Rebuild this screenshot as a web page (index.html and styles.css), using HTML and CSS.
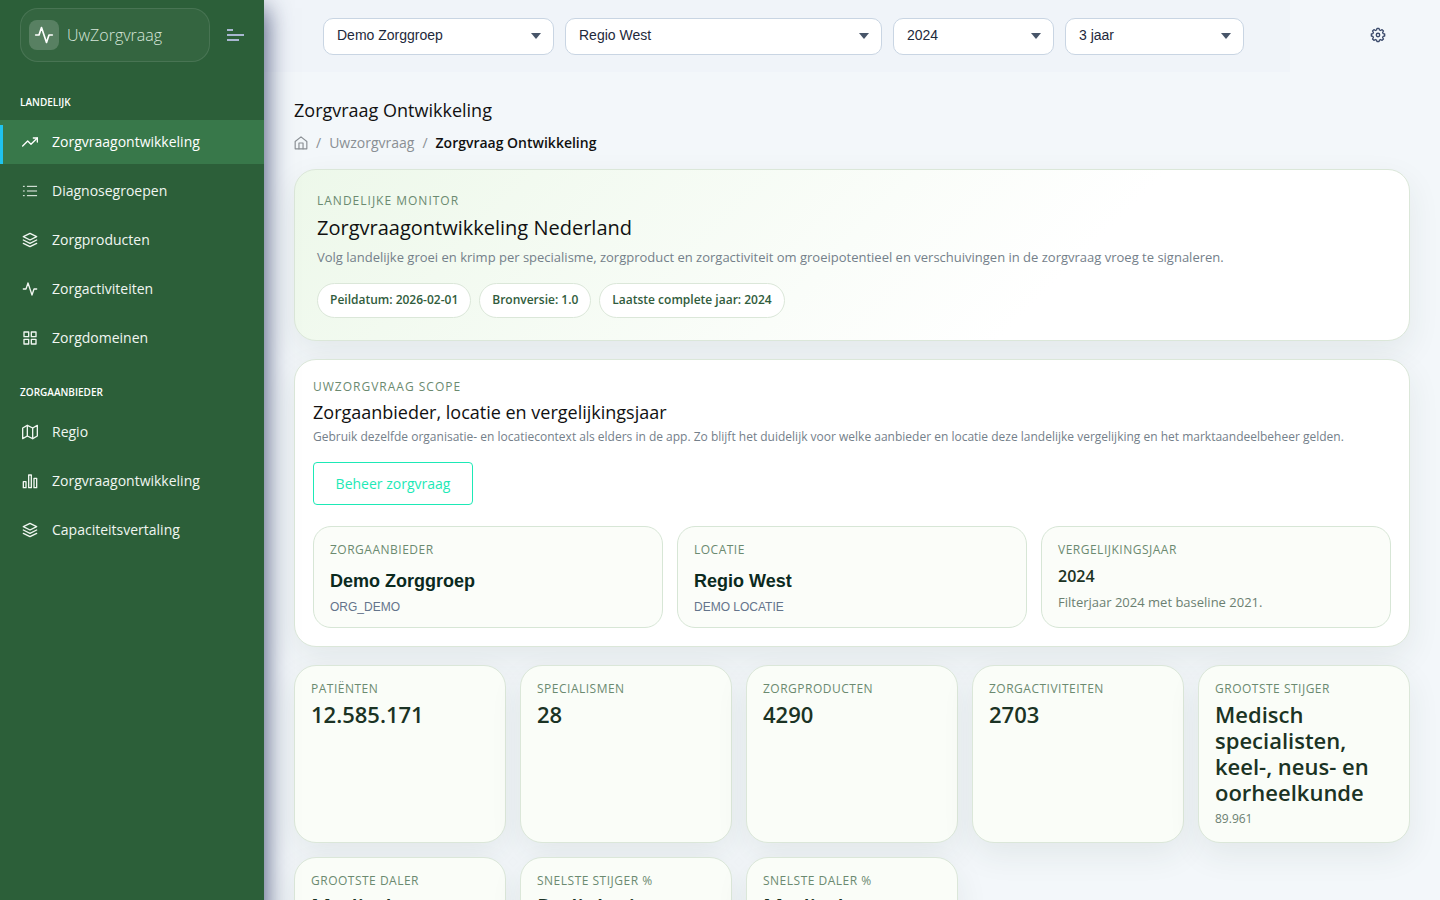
FILE: index.html
```html
<!DOCTYPE html>
<html lang="nl">
<head>
    <meta charset="UTF-8">
    <meta name="viewport" content="width=device-width, initial-scale=1.0">
    <title>Zorgvraag Ontwikkeling</title>
    <link rel="stylesheet" href="styles.css">
</head>
<body>

    <div class="layout">
        <aside class="sidebar">
            <div class="sidebar-header">
                <a class="brand" href="#">
                    <span class="brand-icon">
                        <svg viewBox="0 0 24 24"><path d="M22 12h-4l-3 9L9 3l-3 9H2"/></svg>
                    </span>
                    <span class="brand-name">UwZorgvraag</span>
                </a>
                <button class="menu-toggle" type="button" aria-label="Menu">
                    <svg viewBox="0 0 18 14"><path d="M1 2h6M1 7h17M1 12h12"/></svg>
                </button>
            </div>

            <nav class="nav">
                <h6 class="nav-title">Landelijk</h6>
                <a class="nav-item active" href="#">
                    <svg viewBox="0 0 24 24"><path d="M23 6l-9.5 9.5-5-5L1 18"/><path d="M17 6h6v6"/></svg>
                    <span>Zorgvraagontwikkeling</span>
                </a>
                <a class="nav-item" href="#">
                    <svg class="thin" viewBox="0 0 24 24"><path d="M8 5h14M8 12h14M8 19h14M2 5h1.5M2 12h1.5M2 19h1.5"/></svg>
                    <span>Diagnosegroepen</span>
                </a>
                <a class="nav-item" href="#">
                    <svg viewBox="0 0 24 24"><path d="M12 2L2 7l10 5 10-5z"/><path d="M2 12l10 5 10-5"/><path d="M2 17l10 5 10-5"/></svg>
                    <span>Zorgproducten</span>
                </a>
                <a class="nav-item" href="#">
                    <svg viewBox="0 0 24 24"><path d="M22 12h-4l-3 9L9 3l-3 9H2"/></svg>
                    <span>Zorgactiviteiten</span>
                </a>
                <a class="nav-item" href="#">
                    <svg viewBox="0 0 24 24"><path d="M3 3h7v7H3zM14 3h7v7h-7zM14 14h7v7h-7zM3 14h7v7H3z"/></svg>
                    <span>Zorgdomeinen</span>
                </a>

                <h6 class="nav-title">Zorgaanbieder</h6>
                <a class="nav-item" href="#">
                    <svg viewBox="0 0 24 24"><path d="M1 6v16l7-4 8 4 7-4V2l-7 4-8-4z"/><path d="M8 2v16M16 6v16"/></svg>
                    <span>Regio</span>
                </a>
                <a class="nav-item" href="#">
                    <svg viewBox="0 0 24 24"><path d="M2 13h4v9H2zM10 3h4v19h-4zM18 8h4v14h-4z"/></svg>
                    <span>Zorgvraagontwikkeling</span>
                </a>
                <a class="nav-item" href="#">
                    <svg viewBox="0 0 24 24"><path d="M12 2L2 7l10 5 10-5z"/><path d="M2 12l10 5 10-5"/><path d="M2 17l10 5 10-5"/></svg>
                    <span>Capaciteitsvertaling</span>
                </a>
            </nav>
        </aside>

        <div class="page">
            <header class="topbar">
                <form class="filters">
                    <select class="filter" aria-label="Organisatie"><option>Demo Zorggroep</option></select>
                    <select class="filter" aria-label="Locatie"><option>Regio West</option></select>
                    <select class="filter" aria-label="Jaar"><option>2024</option></select>
                    <select class="filter" aria-label="Periode"><option>3 jaar</option></select>
                </form>
                <div class="topbar-actions">
                    <button class="settings" type="button" aria-label="Instellingen">
                        <svg viewBox="0 0 24 24"><path d="M9.800 4.500L10.500 2h3l.7 2.500 1.600.7 2.300-1.300 2.100 2.100-1.300 2.300.7 1.600 2.400.6v3l-2.400.6-.7 1.600 1.300 2.300-2.100 2.100-2.300-1.300-1.600.7-.7 2.500h-3l-.7-2.500-1.600-.7-2.300 1.300L3.800 18l1.300-2.300-.7-1.600-2.400-.6v-3l2.400-.6.7-1.600L3.800 6l2.100-2.100 2.300 1.300z"/><circle cx="12" cy="12" r="2.600"/></svg>
                    </button>
                </div>
            </header>

            <main class="content">
                <h1 class="page-title">Zorgvraag Ontwikkeling</h1>
                <nav class="breadcrumb" aria-label="Kruimelpad">
                    <a href="#" aria-label="Home">
                        <svg viewBox="0 0 24 24"><path d="M2 9.500L12 1.500l10 8V22H2z"/><path d="M8.500 22V12h7v10"/></svg>
                    </a>
                    <span>/</span>
                    <a href="#">Uwzorgvraag</a>
                    <span>/</span>
                    <strong>Zorgvraag Ontwikkeling</strong>
                </nav>

                <section class="card hero">
                    <p class="eyebrow">Landelijke monitor</p>
                    <h2 class="hero-title">Zorgvraagontwikkeling Nederland</h2>
                    <p class="hero-text">Volg landelijke groei en krimp per specialisme, zorgproduct en zorgactiviteit om groeipotentieel en verschuivingen in de zorgvraag vroeg te signaleren.</p>
                    <div class="pills">
                        <span class="pill">Peildatum: 2026-02-01</span>
                        <span class="pill">Bronversie: 1.0</span>
                        <span class="pill">Laatste complete jaar: 2024</span>
                    </div>
                </section>

                <section class="card scope">
                    <p class="eyebrow">UwZorgvraag scope</p>
                    <h3 class="scope-title">Zorgaanbieder, locatie en vergelijkingsjaar</h3>
                    <p class="scope-text">Gebruik dezelfde organisatie- en locatiecontext als elders in de app. Zo blijft het duidelijk voor welke aanbieder en locatie deze landelijke vergelijking en het marktaandeelbeheer gelden.</p>
                    <button class="btn-outline" type="button">Beheer zorgvraag</button>
                    <div class="scope-grid">
                        <div class="scope-item">
                            <p class="label">Zorgaanbieder</p>
                            <p class="org-name">Demo Zorggroep</p>
                            <p class="org-code">ORG_DEMO</p>
                        </div>
                        <div class="scope-item">
                            <p class="label">Locatie</p>
                            <p class="org-name">Regio West</p>
                            <p class="org-code">DEMO LOCATIE</p>
                        </div>
                        <div class="scope-item">
                            <p class="label">Vergelijkingsjaar</p>
                            <p class="year">2024</p>
                            <p class="note">Filterjaar 2024 met baseline 2021.</p>
                        </div>
                    </div>
                </section>

                <section class="stats">
                    <div class="card stat">
                        <p class="label">Patiënten</p>
                        <p class="value">12.585.171</p>
                    </div>
                    <div class="card stat">
                        <p class="label">Specialismen</p>
                        <p class="value">28</p>
                    </div>
                    <div class="card stat">
                        <p class="label">Zorgproducten</p>
                        <p class="value">4290</p>
                    </div>
                    <div class="card stat">
                        <p class="label">Zorgactiviteiten</p>
                        <p class="value">2703</p>
                    </div>
                    <div class="card stat">
                        <p class="label">Grootste stijger</p>
                        <p class="value">Medisch specialisten, keel-, neus- en oorheelkunde</p>
                        <p class="note">89.961</p>
                    </div>
                    <div class="card stat">
                        <p class="label">Grootste daler</p>
                        <p class="value">Medisch</p>
                    </div>
                    <div class="card stat">
                        <p class="label">Snelste stijger %</p>
                        <p class="value">Radiologie</p>
                    </div>
                    <div class="card stat">
                        <p class="label">Snelste daler %</p>
                        <p class="value">Medisch</p>
                    </div>
                </section>
            </main>
        </div>
    </div>

</body>
</html>
```

FILE: styles.css
```css
* {
    box-sizing: border-box;
}

body {
    margin: 0;
    font-family: "Open Sans", sans-serif;
    font-size: 14px;
    color: #111;
    background-color: #f3f7fa;
}

h1, h2, h3, h6, p {
    margin: 0;
    font-weight: 400;
}

a {
    color: inherit;
    text-decoration: none;
}

svg {
    display: block;
    fill: none;
    stroke: currentColor;
    stroke-width: 2;
    stroke-linecap: round;
    stroke-linejoin: round;
}

button {
    font-family: inherit;
    cursor: pointer;
}

.layout {
    display: flex;
    align-items: stretch;
    min-height: 100vh;
}

/* Sidebar */
.sidebar {
    position: relative;
    z-index: 2;
    flex: 0 0 264px;
    background-color: #2c5f39;
    box-shadow: 0 10px 24px 2px rgba(38, 50, 96, 0.8);
}

.sidebar-header {
    display: flex;
    align-items: center;
    gap: 16px;
    padding: 8px 20px 0;
}

.brand {
    display: flex;
    align-items: center;
    gap: 8px;
    flex: 0 0 190px;
    height: 54px;
    padding: 0 8px;
    border: 1px solid rgba(255, 255, 255, 0.1);
    border-radius: 18px;
    background-color: rgba(255, 255, 255, 0.04);
}

.brand-icon {
    display: flex;
    align-items: center;
    justify-content: center;
    width: 30px;
    height: 30px;
    border-radius: 8px;
    background-color: rgba(255, 255, 255, 0.18);
    color: #fff;
}

.brand-icon svg {
    width: 20px;
    height: 20px;
}

.brand-name {
    font-size: 16px;
    font-weight: 300;
    color: #d6e5da;
}

.menu-toggle {
    padding: 0;
    border: 0;
    background: none;
    color: #a9b7d1;
}

.menu-toggle svg {
    width: 18px;
    height: 14px;
    stroke-linecap: butt;
}

.nav-title {
    padding: 33px 20px 11px;
    font-size: 10px;
    line-height: 14px;
    font-weight: 600;
    text-transform: uppercase;
    color: #fff;
}

.nav-item + .nav-title {
    padding-top: 20px;
}

.nav-item {
    display: flex;
    align-items: center;
    gap: 14px;
    height: 44px;
    margin-bottom: 5px;
    padding: 0 22px;
    color: #f0f6f1;
}

.nav-item span {
    padding-bottom: 2px;
}

.nav-item svg {
    width: 16px;
    height: 16px;
    flex: none;
}

.nav-item .thin {
    stroke-width: 1.5;
}

.nav-item.active {
    background: linear-gradient(#1fc3ee, #1fc3ee) 0 100% / 3px 39px no-repeat #38784a;
    color: #fff;
}

/* Topbar */
.page {
    flex: 1;
    min-width: 0;
}

.topbar {
    display: flex;
    height: 72px;
}

.filters {
    flex: 1;
    display: grid;
    grid-template-columns: 231fr 317fr 161fr 179fr;
    gap: 11px;
    padding: 18px 46px 17px 59px;
    background-color: #f0f4f9;
}

.filter {
    appearance: none;
    min-width: 0;
    padding: 0 32px 3px 13px;
    border: 1px solid #c9d5e3;
    border-radius: 10px;
    background: #fff url("data:image/svg+xml,%3Csvg xmlns='http://www.w3.org/2000/svg' width='10' height='6'%3E%3Cpath d='M0 0h10L5 6z' fill='%23475569'/%3E%3C/svg%3E") right 12px top 14px no-repeat;
    font-family: "Liberation Sans", Arial, sans-serif;
    font-size: 14px;
    color: #1e293b;
}

.topbar-actions {
    flex: 0 0 150px;
    display: flex;
    justify-content: flex-end;
    padding: 27px 54px 0 0;
}

.settings {
    align-self: flex-start;
    padding: 0;
    border: 0;
    background: none;
    color: #3b4a6b;
}

.settings svg {
    width: 16px;
    height: 16px;
}

/* Content */
.content {
    padding: 26px 30px 30px;
}

.page-title {
    font-size: 18px;
    line-height: 25px;
}

.breadcrumb {
    display: flex;
    align-items: center;
    gap: 8px;
    margin: 10px 0 16px;
    line-height: 20px;
    color: #8a8f94;
}

.breadcrumb svg {
    width: 14px;
    height: 14px;
}

.breadcrumb strong {
    font-weight: 600;
    color: #111;
}

.card {
    border: 1px solid #dbe7d9;
    border-radius: 22px;
    background-color: #fff;
    box-shadow: 0 12px 32px rgba(44, 62, 50, 0.08);
}

.eyebrow {
    font-size: 12px;
    line-height: 18px;
    letter-spacing: 1px;
    text-transform: uppercase;
    color: #6b8a70;
}

.hero {
    padding: 22px;
    background-image: linear-gradient(135deg, #edf8ea 0%, #fff 68%);
}

.hero-title {
    margin: 4px 0;
    font-size: 20px;
    line-height: 28px;
}

.hero-text {
    font-size: 13px;
    line-height: 22px;
    color: #74808a;
}

.pills {
    display: flex;
    flex-wrap: wrap;
    gap: 8px;
    margin-top: 15px;
}

.pill {
    padding: 7px 12px 8px;
    border: 1px solid #dbe7d9;
    border-radius: 18px;
    background-color: #fff;
    font-size: 12px;
    line-height: 18px;
    font-weight: 600;
    color: #315c3c;
}

.scope {
    margin-top: 18px;
    padding: 18px;
}

.scope-title {
    margin-top: 4px;
    font-size: 18px;
    line-height: 24px;
}

.scope-text {
    margin-top: 4px;
    font-size: 12px;
    line-height: 18px;
    color: #74808a;
}

.btn-outline {
    min-width: 160px;
    height: 43px;
    margin: 16px 0 21px;
    padding: 0 20px;
    border: 1px solid #1de9b6;
    border-radius: 4px;
    background-color: #fff;
    font-size: 14px;
    color: #1de9b6;
}

.scope-grid {
    display: grid;
    grid-template-columns: repeat(3, 1fr);
    gap: 14px;
}

.scope-item {
    min-height: 102px;
    padding: 14px 16px 10px;
    border: 1px solid #d7e6d6;
    border-radius: 18px;
    background-color: #fbfdf9;
}

.label {
    font-size: 12px;
    line-height: 18px;
    letter-spacing: 0.5px;
    text-transform: uppercase;
    color: #6b8a70;
}

.org-name {
    margin-top: 10px;
    font-family: "Liberation Sans", Arial, sans-serif;
    font-size: 18px;
    line-height: 24px;
    font-weight: 700;
    color: #0b2a1e;
}

.org-code {
    margin-top: 5px;
    font-family: "Liberation Sans", Arial, sans-serif;
    font-size: 12px;
    line-height: 18px;
    color: #64748b;
}

.year {
    margin-top: 5px;
    font-size: 16px;
    line-height: 24px;
    font-weight: 600;
    color: #1b3324;
}

.scope-item .note {
    margin-top: 5px;
}

.note {
    font-size: 13px;
    line-height: 18px;
    color: #6b8071;
}

.stats {
    display: grid;
    grid-template-columns: repeat(5, 1fr);
    gap: 14px;
    margin-top: 18px;
}

.stat {
    min-height: 178px;
    padding: 14px 16px;
    background-color: #fafdf8;
}

.value {
    margin: 3px 0 5px;
    font-size: 22px;
    line-height: 26px;
    font-weight: 600;
    color: #1b3324;
}

.stat .note {
    font-size: 12px;
}
```
